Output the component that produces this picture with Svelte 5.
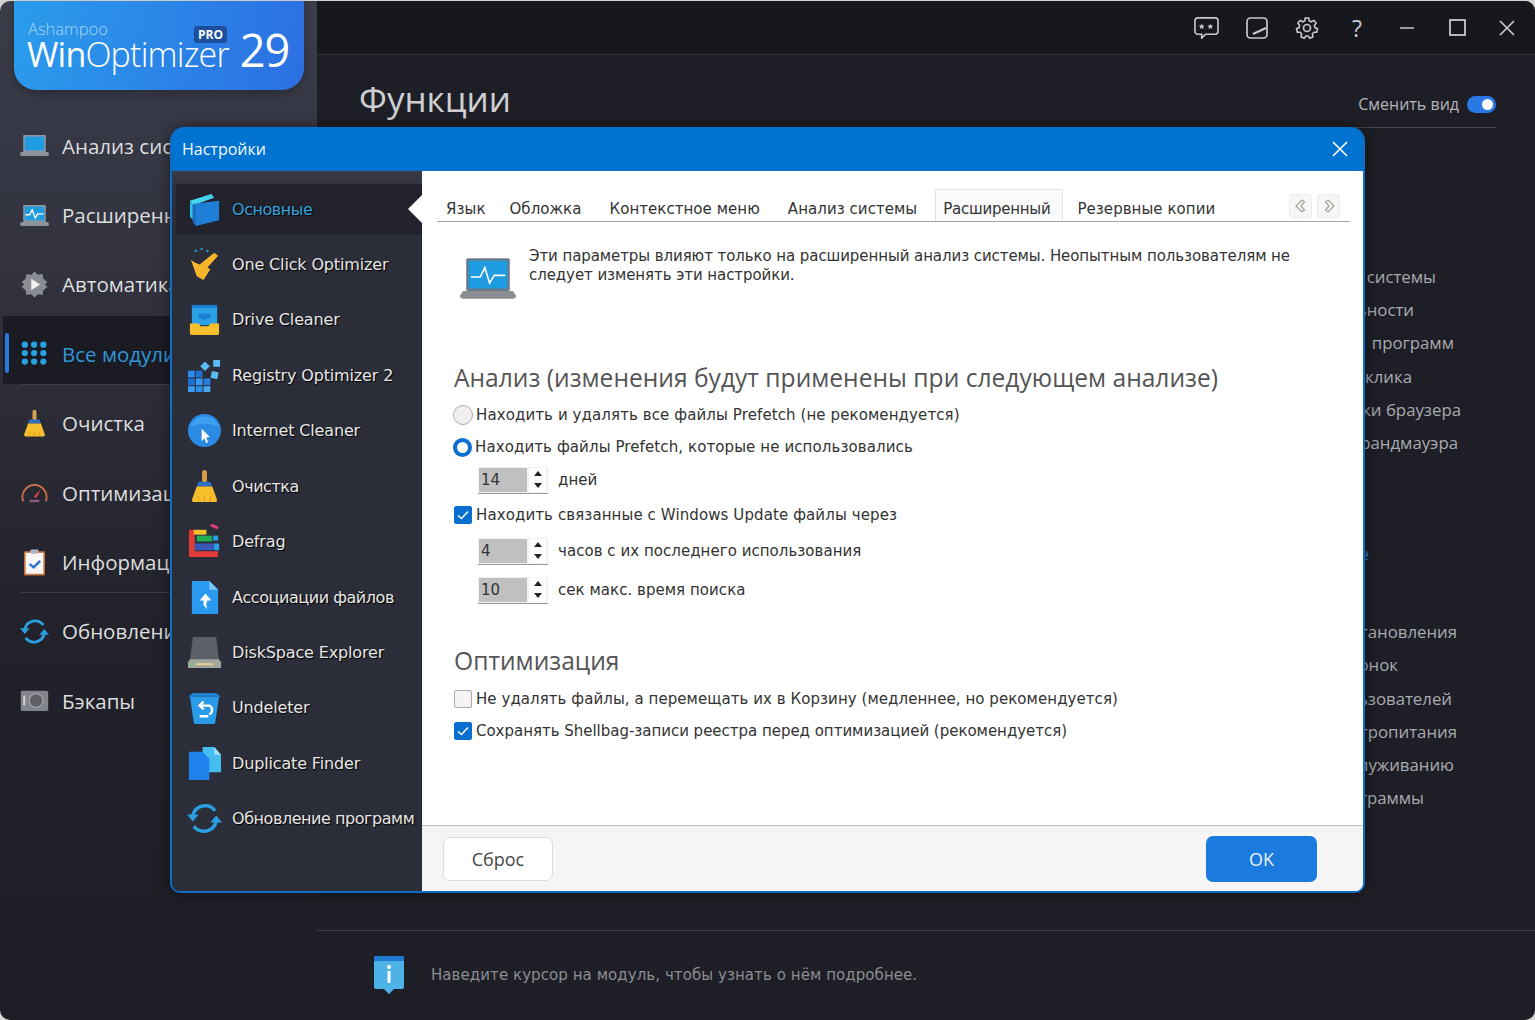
<script>
  const nav = [
    { icon: 'laptop', label: 'Анализ системы' },
    { icon: 'pulse', label: 'Расширенный анализ' },
    { icon: 'gear', label: 'Автоматика' },
    { icon: 'dots', label: 'Все модули', active: true, rule: true },
    { icon: 'broom', label: 'Очистка' },
    { icon: 'gauge', label: 'Оптимизация' },
    { icon: 'clip', label: 'Информация', rule: true },
    { icon: 'refresh', label: 'Обновления' },
    { icon: 'camera', label: 'Бэкапы' }
  ]

  const modules = [
    { icon: 'layers', label: 'Основные', active: true },
    { icon: 'click', label: 'One Click Optimizer' },
    { icon: 'drive', label: 'Drive Cleaner' },
    { icon: 'registry', label: 'Registry Optimizer 2' },
    { icon: 'globe', label: 'Internet Cleaner' },
    { icon: 'broom', label: 'Очистка' },
    { icon: 'defrag', label: 'Defrag' },
    { icon: 'assoc', label: 'Ассоциации файлов' },
    { icon: 'disk', label: 'DiskSpace Explorer' },
    { icon: 'trash', label: 'Undeleter' },
    { icon: 'dup', label: 'Duplicate Finder' },
    { icon: 'refresh', label: 'Обновление программ' }
  ]

  const tabs = ['Язык', 'Обложка', 'Контекстное меню', 'Анализ системы', 'Расширенный', 'Резервные копии']

  const groupA = [
    { text: 'Настройки системы', end: 1436 },
    { text: 'Конфиденциальности', end: 1414 },
    { text: 'Удаление\u00a0\u00a0программ', end: 1454 },
    { text: 'Оптимизация в один клика', end: 1412 },
    { text: 'Настройки браузера', end: 1461 },
    { text: 'Настройки брандмауэра', end: 1458 }
  ]
  const groupB = [
    { text: 'Центр установления', end: 1457 },
    { text: 'Настройка иконок', end: 1398 },
    { text: 'Учётные записи пользователей', end: 1452 },
    { text: 'Параметры электропитания', end: 1457 },
    { text: 'Советы по обслуживанию', end: 1454 },
    { text: 'Обзор программы', end: 1424 }
  ]

  const isRu = (s) => /[а-я]/i.test(s)
</script>

{#snippet icon(name, size)}
  <svg width={size} height={size} viewBox="0 0 36 36" class="ico">
    {#if name === 'laptop' || name === 'pulse'}
      <rect x="4" y="5" width="28" height="21" rx="1" fill="#8b97a3" />
      <rect x="6" y="7" width="24" height="17" fill="#1f9be0" />
      <path d="M1 26h34l1 3q0 2-2 2H2q-2 0-2-2z" fill="#8d939b" />
      {#if name === 'pulse'}
        <path d="M7 17h5l3-6 4 10 3-5h7" fill="none" stroke="#fff" stroke-width="1.7" />
      {/if}
    {:else if name === 'gear'}
      <path d="M18 2l4 4 6-1 1 6 5 4-3 3 3 3-5 4-1 6-6-1-4 4-4-4-6 1-1-6-5-4 3-3-3-3 5-4 1-6 6 1z" fill="#8a8c94" />
      <path d="M14 11l11 7-11 7z" fill="#f2f2f2" />
    {:else if name === 'dots'}
      {#each [7, 17.5, 28] as y}
        {#each [6, 17.5, 29] as x}
          <circle cx={x} cy={y} r="3.9" fill="#27a3e4" />
        {/each}
      {/each}
    {:else if name === 'broom'}
      <rect x="15.5" y="1" width="5" height="13" rx="2.5" fill="#d8a04a" />
      <path d="M12 13h12l2 5H10z" fill="#2d71c8" />
      <path d="M10 18h16l5 14q0 2-2 2H7q-2 0-2-2z" fill="#f7bf2c" />
      <path d="M12 28v6M18 28v6M24 28v6" stroke="#d99a18" stroke-width="1" />
    {:else if name === 'gauge'}
      <path d="M4 29a15 15 0 1 1 28 0" fill="none" stroke="#c76f4a" stroke-width="2.4" />
      <path d="M17 23l9-9-6 11z" fill="#d94040" />
      <rect x="12" y="27" width="12" height="3" fill="#8a5a80" />
    {:else if name === 'clip'}
      <rect x="5" y="4" width="26" height="30" rx="1" fill="#c8733c" />
      <rect x="7" y="6" width="22" height="26" fill="#f7f7fa" />
      <rect x="13" y="2" width="10" height="5" rx="1" fill="#b4b4bc" />
      <path d="M12 20l5 4 8-8" fill="none" stroke="#2a6fd4" stroke-width="3" />
    {:else if name === 'refresh'}
      <path d="M6 15A13 13 0 0 1 29 10" fill="none" stroke="#2a9fe0" stroke-width="3.6" />
      <path d="M30 21A13 13 0 0 1 7 26" fill="none" stroke="#2a9fe0" stroke-width="3.6" />
      <path d="M0 14h12l-6 7zM36 22H24l6-7z" fill="#2a9fe0" />
    {:else if name === 'camera'}
      <rect x="1" y="6" width="34" height="25" rx="2" fill="#83858c" />
      <circle cx="20" cy="18" r="8.5" fill="#5f6066" stroke="#a4a5aa" stroke-width="1.5" />
      <rect x="4" y="12" width="2.5" height="12" fill="#d4d4d8" />
    {:else if name === 'layers'}
      <path d="M3 9l22-7 3 4-22 8z" fill="#44d4ee" />
      <path d="M3 9l3 5v15l-3-4z" fill="#2ec0e6" />
      <path d="M7 12l26-3v20l-24 6z" fill="#1f7fd6" />
      <path d="M6 12l3 2v21l-3-4z" fill="#1a6cc0" />
    {:else if name === 'click'}
      <path d="M4 13l4 3 5 2 15-12 4 3-11 12 3 2-7 11-7-4z" fill="#f7b52c" />
      <circle cx="9" cy="4" r="1.2" fill="#2a9fe0" />
      <circle cx="15" cy="2" r="1.2" fill="#2a9fe0" />
      <circle cx="21" cy="4" r="1.2" fill="#2a9fe0" />
    {:else if name === 'drive'}
      <path d="M7 3h22q2 0 2 2v19H5V5q0-2 2-2z" fill="#2aa2e8" />
      <rect x="5" y="3" width="26" height="3" fill="#1b7fd0" />
      <path d="M12 12h12v5h-4l-2 2-2-2h-4z" fill="#1b7fd0" />
      <path d="M3 22h9l2 3h8l2-3h9v10q0 2-2 2H5q-2 0-2-2z" fill="#f7bf2c" />
    {:else if name === 'registry'}
      <rect x="1" y="13" width="7" height="7" fill="#2a8ce8" />
      <rect x="9" y="13" width="7" height="7" fill="#1f6fd0" />
      <rect x="1" y="21" width="7" height="7" fill="#1f6fd0" />
      <rect x="9" y="21" width="7" height="7" fill="#3a9cf0" />
      <rect x="17" y="21" width="7" height="7" fill="#2a7ce0" />
      <rect x="1" y="29" width="7" height="6" fill="#3a9cf0" />
      <rect x="9" y="29" width="7" height="6" fill="#2a8ce8" />
      <rect x="17" y="29" width="7" height="6" fill="#4aa8f0" />
      <rect x="15" y="5" width="7" height="7" transform="rotate(45 18.5 8.5)" fill="#58bdf2" />
      <rect x="27" y="2" width="7" height="7" fill="#58bdf2" />
      <rect x="25" y="14" width="7" height="7" transform="rotate(12 28 17)" fill="#58bdf2" />
    {:else if name === 'globe'}
      <circle cx="18" cy="18" r="17" fill="#2a8ae4" />
      <path d="M3 14a16 16 0 0 1 30 0q-15-6-30 0z" fill="#3d9ff0" />
      <path d="M19 15l9 9-4 .5 2 5-2 1-2-5-3 3z" fill="#fff" transform="translate(-3 2) scale(.95)" />
    {:else if name === 'defrag'}
      <path d="M2 6h6v22h24v6H2z" fill="#e23a36" />
      <rect x="7" y="6" width="13" height="5" fill="#f5c02c" />
      <rect x="10" y="12" width="16" height="6" fill="#1fae55" />
      <rect x="8" y="20" width="20" height="7" fill="#3857b8" />
      <rect x="28" y="20" width="5" height="7" fill="#2aa2e8" />
      <rect x="27" y="12" width="5" height="5" fill="#2aa2e8" />
      <rect x="24" y="1" width="8" height="3" transform="rotate(25 28 3)" fill="#e33a84" />
    {:else if name === 'assoc'}
      <path d="M5 1h18l9 9v25H5z" fill="#2a9af0" />
      <path d="M23 1l9 9h-9z" fill="#7cc6f7" />
      <path d="M19 14l-6 7h4v5l4 4q-2-5 0-9h4z" fill="#fff" />
    {:else if name === 'disk'}
      <path d="M6 2h24l3 25H3z" fill="#5d6068" />
      <path d="M3 25h30l2 3v6H1v-6z" fill="#a3a69e" />
      <path d="M9 29h18v2H9z" fill="#e2d28a" />
      <circle cx="5" cy="30" r="1.3" fill="#5ed36c" />
    {:else if name === 'trash'}
      <path d="M6 3h24l5 4H1z" fill="#1f7fd0" />
      <path d="M3 7h30l-4 27q0 1-2 1H9q-2 0-2-1z" fill="#2a9be8" />
      <path d="M23 25a5 5 0 0 0 0-9h-9m3-4l-4 4 4 4M13 27h9" fill="none" stroke="#fff" stroke-width="2.4" />
    {:else if name === 'dup'}
      <path d="M16 1h12l7 8v18H16z" fill="#45bdf0" />
      <path d="M28 1l7 8h-7z" fill="#a3dff8" />
      <path d="M2 6h14l7 7v22H2z" fill="#1f82ec" />
    {/if}
  </svg>
{/snippet}

{#snippet spinner(value, label, size)}
  <div class="spin-row {size}">
    <div class="spin">
      <span class="spin-val">{value}</span>
      <span class="spin-btns"><i class="up"></i><i class="down"></i></span>
    </div>
    <span>{label}</span>
  </div>
{/snippet}

<div class="window">
  <aside class="side">
    <div class="logo">
      <span class="logo-brand">Ashampoo</span>
      <div class="logo-row">
        <span class="logo-name"><b>Win</b>Optimizer</span>
        <span class="logo-ver">29</span>
      </div>
      <span class="pro">PRO</span>
    </div>
    <nav class="nav">
      {#each nav as item}
        <div class="nav-item" class:active={item.active}>
          {@render icon(item.icon, 29)}
          <span>{item.label}</span>
          {#if item.rule}<i class="divider"></i>{/if}
        </div>
      {/each}
    </nav>
  </aside>

  <main class="main">
    <header class="top">
      <svg width="25" height="23" viewBox="0 0 26 24" class="tb"><path d="M4 2h18q3 0 3 3v11q0 3-3 3H12l-4 4v-4H4q-3 0-3-3V5q0-3 3-3z" /><path d="M8 8l1 2h2l-1.500 1.500.5 2-2-1-2 1 .5-2L5 10h2zM17 8l1 2h2l-1.500 1.500.5 2-2-1-2 1 .5-2L14 10h2z" fill="#c8c8cc" stroke="none" /></svg>
      <svg width="24" height="24" viewBox="0 0 24 24" class="tb"><rect x="2" y="2" width="20" height="20" rx="3.500" /><path d="M8 18l13-6" stroke-width="2.400" /></svg>
      <svg width="24" height="24" viewBox="0 0 24 24" class="tb"><circle cx="12" cy="12" r="3.500" /><path d="M10.300 2h3.400l.6 2.900 2 .9 2.600-1.400 2.200 2.700-1.700 2.400.5 2.100 2.600 1.200-.8 3.400-2.900 0-1.400 1.700.6 2.900-3.100 1.500-1.800-2.300h-2.200l-1.800 2.300-3.100-1.500.6-2.900-1.400-1.700-2.900 0-.8-3.400 2.600-1.200.5-2.100-1.700-2.400 2.200-2.700 2.600 1.400 2-.9z" stroke-width="1.600" /></svg>
      <span class="tb-q">?</span>
      <svg width="24" height="24" viewBox="0 0 24 24" class="tb"><path d="M5 12h14" /></svg>
      <svg width="24" height="24" viewBox="0 0 24 24" class="tb"><rect x="5" y="4" width="15" height="15" stroke-width="1.800" /></svg>
      <svg width="24" height="24" viewBox="0 0 24 24" class="tb"><path d="M5 5l14 14M19 5L5 19" /></svg>
    </header>

    <div class="page">
      <div class="page-head">
        <h1>Функции</h1>
        <div class="switch-view">
          <span>Сменить вид</span>
          <span class="toggle"><i></i></span>
        </div>
      </div>

      <div class="lists">
        <ul>
          {#each groupA as row}
            <li style="margin-right:{1535 - row.end}px">{row.text}</li>
          {/each}
        </ul>
        <div class="more">Подробнее</div>
        <ul>
          {#each groupB as row}
            <li style="margin-right:{1535 - row.end}px">{row.text}</li>
          {/each}
        </ul>
      </div>
    </div>

    <footer class="foot">
      <svg width="32" height="38" viewBox="0 0 32 38">
        <path d="M1 2q0-2 2-2h26q2 0 2 2v29q0 2-2 2h-8l-5 5-5-5H3q-2 0-2-2z" fill="#4db2e6" />
        <path d="M1 5V2q0-2 2-2h26q2 0 2 2v3z" fill="#1f78d0" />
        <circle cx="16" cy="11" r="2" fill="#fff" /><rect x="14.500" y="15" width="3" height="12" fill="#fff" />
      </svg>
      <span>Наведите курсор на модуль, чтобы узнать о нём подробнее.</span>
    </footer>
  </main>

  <section class="dialog">
    <header class="dlg-title">
      <span>Настройки</span>
      <svg width="18" height="18" viewBox="0 0 18 18"><path d="M2 2l14 14M16 2L2 16" stroke="#fff" stroke-width="1.600" /></svg>
    </header>
    <div class="dlg-body">
      <div class="dlg-side">
        {#each modules as m}
          <div class="mod" class:active={m.active} class:ru={isRu(m.label)}>
            {@render icon(m.icon, 35)}
            <span>{m.label}</span>
          </div>
        {/each}
      </div>

      <div class="dlg-main">
        <div class="dlg-content">
          <div class="tabs">
            {#each tabs as t}
              <span class="tab" class:current={t === 'Расширенный'}>{t}</span>
            {/each}
            <div class="tab-nav">
              <button aria-label="Назад"><svg width="14" height="16" viewBox="0 0 14 16"><path d="M8 2L2 8l6 6 2.500-2L7 8l3.500-4z" fill="#f4f4f4" stroke="#a5a59c" stroke-width="1.300" /></svg></button>
              <button aria-label="Вперёд"><svg width="14" height="16" viewBox="0 0 14 16"><path d="M6 2l6 6-6 6-2.500-2L7 8 3.500 4z" fill="#f4f4f4" stroke="#a5a59c" stroke-width="1.300" /></svg></button>
            </div>
          </div>

          <div class="intro">
            <svg width="56" height="45" viewBox="0 0 36 28">
              <rect x="4" y="1" width="28" height="21" rx="1" fill="#6e7884" />
              <rect x="5.500" y="2.500" width="25" height="18" fill="#1f9be0" />
              <path d="M7 13h6l3-6 3 10 3-5h7" fill="none" stroke="#fff" stroke-width="1" />
              <path d="M2 22h32l2 3q0 2-2 2H2q-2 0-2-2z" fill="#8a8e94" />
            </svg>
            <p>Эти параметры влияют только на расширенный анализ системы. Неопытным пользователям не следует изменять эти настройки.</p>
          </div>

          <h2 class="first">Анализ (изменения будут применены при следующем анализе)</h2>
          <label class="opt"><span class="radio"></span>Находить и удалять все файлы Prefetch (не рекомендуется)</label>
          <label class="opt"><span class="radio on"></span>Находить файлы Prefetch, которые не использовались</label>
          {@render spinner('14', 'дней', 'short')}
          <label class="opt after-spin"><span class="check on"><svg width="14" height="14" viewBox="0 0 14 14"><path d="M2 7.500l3.500 3L12 3.500" fill="none" stroke="#fff" stroke-width="1.500" /></svg></span>Находить связанные с Windows Update файлы через</label>
          {@render spinner('4', 'часов с их последнего использования', 'tall')}
          {@render spinner('10', 'сек макс. время поиска', 'mid')}

          <h2 class="second">Оптимизация</h2>
          <label class="opt move"><span class="check"></span>Не удалять файлы, а перемещать их в Корзину (медленнее, но рекомендуется)</label>
          <label class="opt shellbag"><span class="check on"><svg width="14" height="14" viewBox="0 0 14 14"><path d="M2 7.500l3.500 3L12 3.500" fill="none" stroke="#fff" stroke-width="1.500" /></svg></span>Сохранять Shellbag-записи реестра перед оптимизацией (рекомендуется)</label>
        </div>

        <div class="dlg-foot">
          <button class="btn">Сброс</button>
          <button class="btn primary">OK</button>
        </div>
      </div>
    </div>
  </section>
</div>

<style>
  :global(body) {
    margin: 0;
    background: #d4d4d4;
  }
  .window {
    position: relative;
    width: 1535px;
    height: 1020px;
    box-sizing: border-box;
    padding-top: 1px;
    display: grid;
    grid-template-columns: 317px 1fr;
    overflow: hidden;
    font-family: "DejaVu Sans", sans-serif;
  }

  /* left column */
  .side {
    background: linear-gradient(#3b3d4b 0, #32333f 260px, #22222b 620px, #1d1d25 1020px);
    border-radius: 10px 0 0 10px;
    font-family: "Open Sans", sans-serif;
  }
  .logo {
    position: relative;
    margin-left: 14px;
    width: 290px;
    height: 89px;
    box-sizing: border-box;
    padding: 19px 0 0 14px;
    border-radius: 0 0 22px 22px;
    background: linear-gradient(100deg, #2a9cec, #2c6fe2);
    color: #fff;
    box-shadow: 0 4px 10px rgba(0, 0, 0, .25);
  }
  .logo-brand {
    display: block;
    font-size: 16.500px;
    line-height: 18px;
    font-weight: 300;
    color: #a8d6f8;
  }
  .logo-row {
    display: flex;
    align-items: baseline;
    margin-top: -9px;
  }
  .logo-name {
    font-size: 34px;
    line-height: 42px;
    font-weight: 300;
    letter-spacing: -.8px;
    margin-left: -1px;
  }
  .logo-name b {
    font-weight: 400;
  }
  .logo-ver {
    font-size: 45px;
    line-height: 42px;
    font-weight: 400;
    margin-left: 11px;
    letter-spacing: -1px;
  }
  .pro {
    position: absolute;
    left: 180px;
    top: 25px;
    padding: 1px 4px;
    border-radius: 3px;
    background: #1b4f9e;
    font-size: 12px;
    line-height: 15px;
    font-weight: 700;
  }
  .nav {
    margin-top: 21px;
    isolation: isolate;
  }
  .nav-item {
    position: relative;
    display: flex;
    align-items: center;
    gap: 13px;
    height: 69.4px;
    padding-left: 20px;
    box-sizing: border-box;
    font-size: 20.500px;
    color: #dedede;
    white-space: nowrap;
  }
  .nav-item.active {
    color: #2f97d8;
  }
  .nav-item.active::before {
    content: "";
    position: absolute;
    left: 5px;
    top: 14px;
    width: 4px;
    height: 40px;
    border-radius: 2px;
    background: #2a78e4;
  }
  .nav-item.active::after {
    content: "";
    position: absolute;
    left: 3px;
    right: 0;
    top: -3px;
    height: 68px;
    background: #1b1b24;
    z-index: -1;
  }
  .divider {
    position: absolute;
    left: 20px;
    right: 0;
    bottom: 4px;
    height: 1px;
    background: #3c3d47;
  }
  .ico {
    flex: none;
  }

  /* main column */
  .main {
    display: flex;
    flex-direction: column;
    background: #1e1f26;
    border-radius: 0 10px 10px 0;
    overflow: hidden;
  }
  .top {
    display: flex;
    align-items: center;
    justify-content: flex-end;
    gap: 26px;
    height: 54px;
    padding-right: 16px;
    background: #17171e;
    border-bottom: 1px solid #31323a;
    box-sizing: border-box;
    flex: none;
  }
  .tb {
    fill: none;
    stroke: #c8c8cc;
    stroke-width: 1.700;
  }
  .tb-q {
    width: 24px;
    text-align: center;
    font: 23px "Open Sans", sans-serif;
    color: #c8c8cc;
  }
  .page {
    flex: 1;
    padding: 0 39px 0 38px;
  }
  .page-head {
    display: flex;
    align-items: flex-end;
    justify-content: space-between;
    height: 72px;
    border-bottom: 1px solid #44454d;
  }
  h1 {
    margin: 0 0 3px 4px;
    font: 400 35px/50px "Open Sans", sans-serif;
    color: #cfcfd2;
  }
  .switch-view {
    display: flex;
    align-items: center;
    gap: 8px;
    margin-bottom: 12px;
    font: 16px "Open Sans", sans-serif;
    color: #b4b4ba;
  }
  .toggle {
    display: flex;
    align-items: center;
    justify-content: flex-end;
    width: 29px;
    height: 17px;
    padding-right: 3px;
    box-sizing: border-box;
    border-radius: 9px;
    background: #2a78e6;
  }
  .toggle i {
    width: 11px;
    height: 11px;
    border-radius: 50%;
    background: #fff;
  }
  .lists {
    margin: 132px -39px 0 0;
    font: 16.800px "Open Sans", sans-serif;
    color: #a9a9b0;
  }
  .lists ul {
    list-style: none;
    margin: 0;
    padding: 0;
    display: flex;
    flex-direction: column;
    align-items: flex-end;
  }
  .lists li {
    height: 33.2px;
    line-height: 33.2px;
    white-space: nowrap;
  }
  .more {
    height: 156px;
    padding-top: 83px;
    box-sizing: border-box;
    text-align: right;
    margin-right: 166px;
    color: #2f7fd0;
    line-height: 24px;
  }
  .foot {
    display: flex;
    align-items: center;
    gap: 26px;
    height: 90px;
    box-sizing: border-box;
    padding: 0 0 2px 56px;
    border-top: 1px solid #3d3e45;
    flex: none;
    font-size: 15px;
    letter-spacing: .07px;
    color: #8c8c90;
  }

  /* settings dialog */
  .dialog {
    position: absolute;
    left: 170px;
    top: 127px;
    width: 1195px;
    height: 766px;
    display: flex;
    flex-direction: column;
    box-sizing: border-box;
    border: 2px solid #0f6dc6;
    border-top: 0;
    border-radius: 14px 14px 10px 10px;
    overflow: hidden;
    background: #2b2d39;
    box-shadow: 0 0 14px rgba(0, 0, 0, .45);
  }
  .dlg-title {
    display: flex;
    align-items: center;
    justify-content: space-between;
    height: 44px;
    flex: none;
    padding: 0 14px 0 10px;
    background: #0072d0;
    color: #f4f8fc;
    font: 16px "Open Sans", sans-serif;
  }
  .dlg-body {
    flex: 1;
    display: grid;
    grid-template-columns: 250px 1fr;
    min-height: 0;
  }
  .dlg-side {
    display: flex;
    flex-direction: column;
    gap: 5.450px;
    padding: 13px 0 0 4px;
    background: linear-gradient(#3a3b47, #2b2d39 24px);
  }
  .mod {
    position: relative;
    display: flex;
    align-items: center;
    gap: 10px;
    height: 50px;
    flex: none;
    padding-left: 11px;
    font-size: 16px;
    letter-spacing: -.15px;
    color: #e6e6e6;
    text-shadow: 1px 1px 1px #000;
    white-space: nowrap;
  }
  .mod.ru {
    letter-spacing: -.45px;
  }
  .mod.active {
    background: #21222c;
    color: #35a0dc;
  }
  .mod.active::after {
    content: "";
    position: absolute;
    right: 0;
    top: 11px;
    border: 14px solid transparent;
    border-left: 0;
    border-right-color: #fff;
  }
  .dlg-main {
    display: flex;
    flex-direction: column;
    background: #fff;
    min-height: 0;
  }
  .dlg-content {
    flex: 1;
    padding: 17px 13px 0 15px;
    font-size: 15px;
    letter-spacing: .1px;
    color: #333;
  }
  .tabs {
    position: relative;
    display: flex;
    align-items: flex-end;
    height: 33px;
    box-sizing: content-box;
    border-bottom: 1px solid #a8a8a8;
    white-space: nowrap;
    letter-spacing: .05px;
  }
  .tab {
    padding: 0 14px 2px 14px;
    line-height: 20px;
    height: 32px;
    box-sizing: border-box;
    display: flex;
    align-items: flex-end;
  }
  .tab:first-child {
    padding: 0 10px 2px 9px;
  }
  .tab.current {
    padding: 0 12px 2px 7px;
    border: 1px solid #e2e2e2;
    border-bottom: 0;
    background: #fafafa;
    border-radius: 2px 2px 0 0;
    margin: 0 0 0 4px;
    letter-spacing: -.25px;
  }
  .tab-nav {
    position: absolute;
    right: 10px;
    top: 6px;
    display: flex;
    gap: 5px;
  }
  .tab-nav button {
    width: 23px;
    height: 24px;
    padding: 0;
    display: flex;
    align-items: center;
    justify-content: center;
    border: 1px solid #ececec;
    border-radius: 3px;
    background: #f6f6f6;
  }
  .intro {
    display: flex;
    align-items: flex-start;
    gap: 13px;
    margin: 25px 0 0 23px;
    height: 70px;
    letter-spacing: -.08px;
  }
  .intro svg {
    flex: none;
    margin-top: 9px;
  }
  .intro p {
    margin: 0;
    width: 775px;
    line-height: 19px;
  }
  h2 {
    margin: 0 0 0 17px;
    font: 400 24.600px/34px "Open Sans", sans-serif;
    letter-spacing: 0;
    color: #555;
  }
  h2.first {
    margin-top: 44px;
    margin-bottom: 4px;
  }
  h2.second {
    margin-top: 35px;
    margin-bottom: 5px;
  }
  .opt {
    display: flex;
    align-items: center;
    gap: 3px;
    height: 32px;
    margin-left: 16px;
    white-space: nowrap;
  }
  .opt.move {
    letter-spacing: .06px;
  }
  .opt.shellbag {
    letter-spacing: -.02px;
  }
  .radio {
    width: 18px;
    height: 18px;
    border-radius: 50%;
    background: #f0f0f0;
    border: 1px solid #aaa;
    flex: none;
  }
  .radio.on {
    width: 11px;
    height: 11px;
    background: #fff;
    border: 4.500px solid #0a6fd0;
  }
  .check {
    display: flex;
    align-items: center;
    justify-content: center;
    width: 18px;
    height: 18px;
    box-sizing: border-box;
    margin-left: .5px;
    margin-right: 1.500px;
    border: 1px solid #aaa;
    border-radius: 2px;
    background: #f4f4f4;
    flex: none;
  }
  .check.on {
    background: #0a6fd0;
    border-color: #0a6fd0;
  }
  .after-spin {
    margin-top: 2px;
  }
  .spin-row {
    display: flex;
    align-items: center;
    gap: 10px;
    margin-left: 41px;
    letter-spacing: .04px;
  }
  .spin-row.short {
    height: 34px;
  }
  .spin-row.tall {
    height: 40px;
  }
  .spin-row.mid {
    height: 38px;
  }
  .spin {
    display: flex;
    align-items: center;
    gap: 2px;
    width: 70px;
    height: 27px;
    box-sizing: border-box;
    border-bottom: 1px solid #999;
    background: #f1f1f1;
    padding: 1px;
  }
  .spin-val {
    width: 48px;
    height: 24px;
    line-height: 24px;
    padding-left: 2px;
    box-sizing: border-box;
    background: #c0c0c0;
    font-size: 15px;
  }
  .spin-btns {
    display: flex;
    flex-direction: column;
    justify-content: space-around;
    align-items: center;
    width: 17px;
    height: 24px;
    background: #fff;
  }
  .spin-btns i {
    border: 4px solid transparent;
  }
  .spin-btns .up {
    border-top: 0;
    border-bottom: 5px solid #222;
  }
  .spin-btns .down {
    border-bottom: 0;
    border-top: 5px solid #222;
  }
  .dlg-foot {
    display: flex;
    align-items: center;
    justify-content: space-between;
    height: 66px;
    flex: none;
    box-sizing: border-box;
    padding: 0 46px 0 21px;
    background: #f5f5f5;
    border-top: 1px solid #bdbdbd;
  }
  .btn {
    width: 110px;
    height: 44px;
    border: 1px solid #dcdcdc;
    border-radius: 7px;
    background: #fff;
    color: #444;
    font: 18px "Open Sans", sans-serif;
  }
  .btn.primary {
    width: 111px;
    height: 46px;
    border: 0;
    background: #1a7ade;
    color: #e8f2fc;
  }
</style>
